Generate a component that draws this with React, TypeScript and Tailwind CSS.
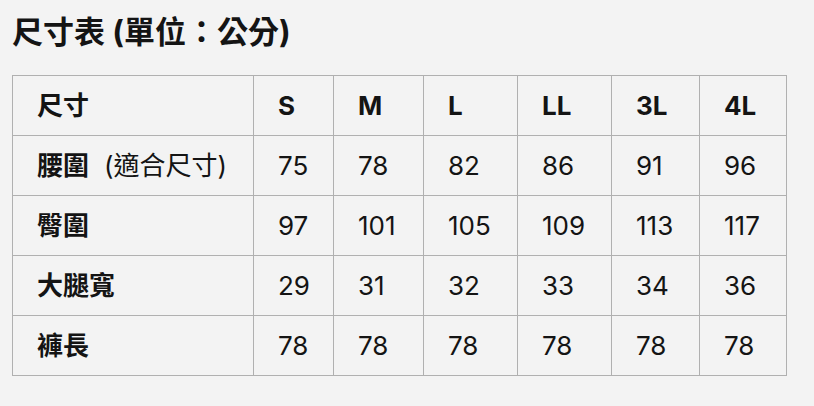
import React from "react";

const sizes = ["S", "M", "L", "LL", "3L", "4L"];
const widths = ["w-[241px]", "w-[80px]", "w-[90px]", "w-[94px]", "w-[94px]", "w-[88px]", "w-[87px]"];
const rows: { label: string; note?: string; values: number[] }[] = [
  { label: "腰圍", note: "(適合尺寸)", values: [75, 78, 82, 86, 91, 96] },
  { label: "臀圍", values: [97, 101, 105, 109, 113, 117] },
  { label: "大腿寬", values: [29, 31, 32, 33, 34, 36] },
  { label: "褲長", values: [78, 78, 78, 78, 78, 78] },
];

export default function App() {
  return (
    <div
      className="w-[814px] h-[406px] bg-[#f3f3f3] text-[#141414] px-[12px] pt-[12px]"
      style={{ fontFamily: 'Inter, "Noto Sans CJK TC", sans-serif' }}
    >
      <h1 className="text-[31px] font-bold leading-[40px] m-0">尺寸表 (單位：公分)</h1>
      <table className="mt-[23px] border-collapse table-fixed w-[775px] text-[26px]">
        <colgroup>
          {widths.map((w, i) => (
            <col key={i} className={w} />
          ))}
        </colgroup>
        <tbody>
          <tr className="h-[60px]">
            <td className="border border-[#b0b0b0] px-[24px] font-bold">尺寸</td>
            {sizes.map((s) => (
              <td key={s} className="border border-[#b0b0b0] px-[24px] font-bold">
                {s}
              </td>
            ))}
          </tr>
          {rows.map((r) => (
            <tr key={r.label} className="h-[60px]">
              <td className="border border-[#b0b0b0] px-[24px] whitespace-nowrap">
                <span className="font-bold">{r.label}</span>
                {r.note && <span className="ml-[15px] font-normal">{r.note}</span>}
              </td>
              {r.values.map((v, i) => (
                <td key={i} className="border border-[#b0b0b0] px-[24px]">
                  {v}
                </td>
              ))}
            </tr>
          ))}
        </tbody>
      </table>
    </div>
  );
}
